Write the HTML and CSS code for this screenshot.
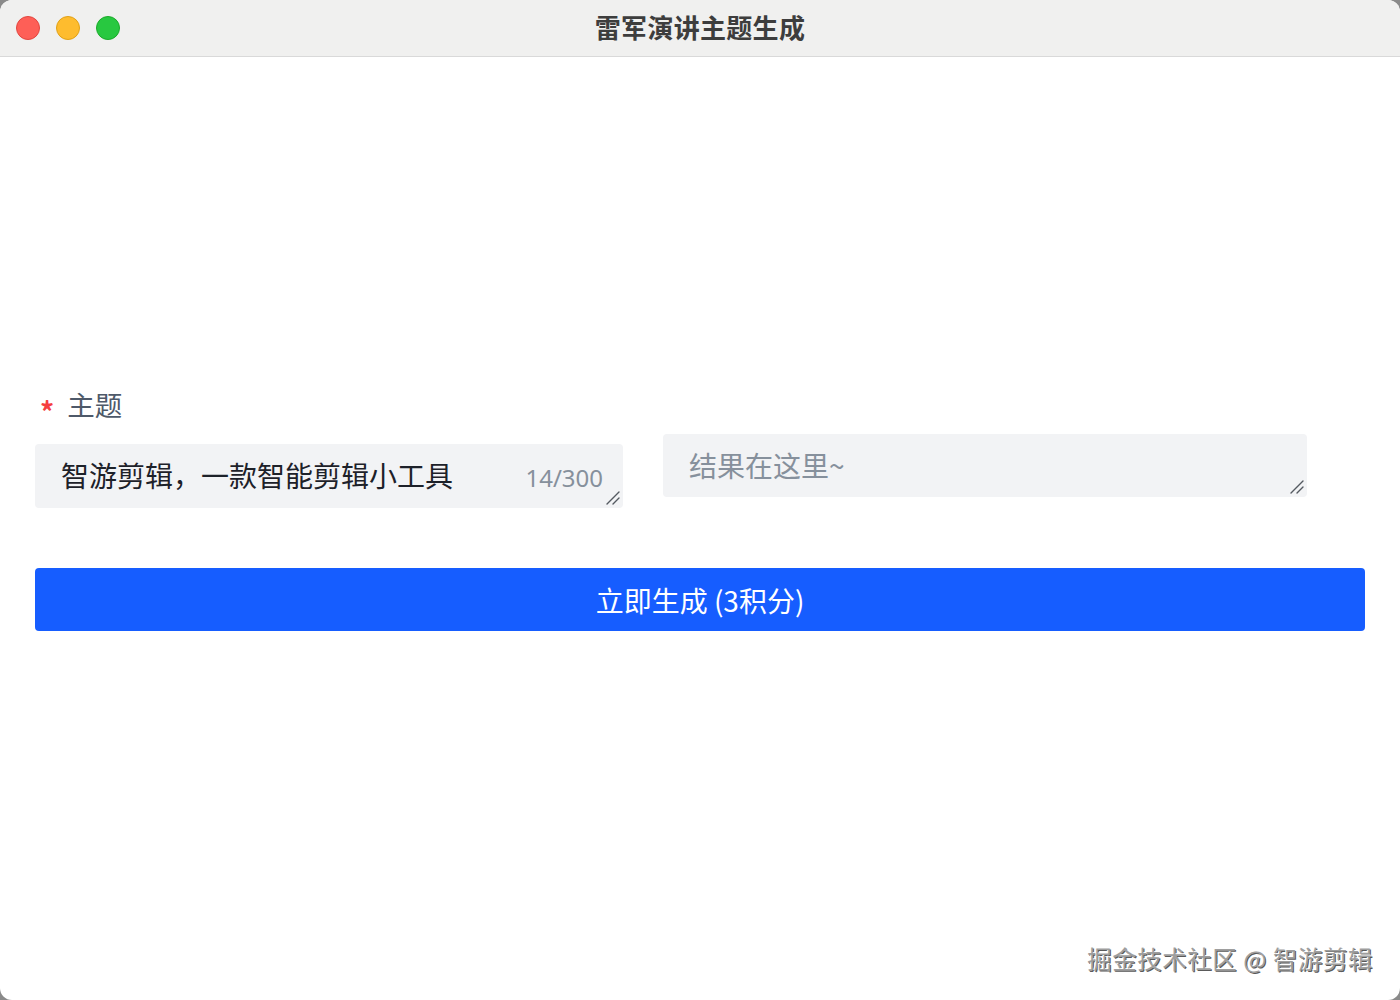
FILE: index.html
```html
<!DOCTYPE html>
<html lang="zh">
<head>
<meta charset="utf-8">
<title>雷军演讲主题生成</title>
<link rel="stylesheet" href="styles.css">
</head>
<body>
<div class="window">
  <div class="titlebar">
    <div class="lights">
      <span class="light red"></span>
      <span class="light yellow"></span>
      <span class="light green"></span>
    </div>
    <div class="title">雷军演讲主题生成</div>
  </div>
  <div class="content">
    <div class="form">
      <div class="row">
        <div class="col-left">
          <div class="label"><span class="req">*</span><span class="label-text">主题</span></div>
          <div class="field">
            <textarea class="input input-left" rows="1">智游剪辑，一款智能剪辑小工具</textarea>
            <span class="counter">14/300</span>
            <svg class="grip" width="14" height="14" viewBox="0 0 14 14"><path d="M1 13 L13 1 M7 13 L13 7" stroke="#555a61" stroke-width="1.4" fill="none" stroke-linecap="round"/></svg>
          </div>
        </div>
        <div class="col-right">
          <div class="field-right">
            <textarea class="input input-right" rows="1" placeholder="结果在这里~"></textarea>
            <svg class="grip" width="14" height="14" viewBox="0 0 14 14"><path d="M1 13 L13 1 M7 13 L13 7" stroke="#555a61" stroke-width="1.4" fill="none" stroke-linecap="round"/></svg>
          </div>
        </div>
      </div>
      <button class="submit">立即生成 (3积分)</button>
    </div>
    <div class="watermark">掘金技术社区 @ 智游剪辑</div>
  </div>
</div>
</body>
</html>
```

FILE: styles.css
```css
* { box-sizing: border-box; }
html, body {
  margin: 0;
  padding: 0;
  width: 1400px;
  height: 1000px;
  background: #8a8a8a;
  overflow: hidden;
}
body {
  font-family: "Noto Sans CJK SC", "Noto Sans", sans-serif;
}
.window {
  width: 1400px;
  height: 1000px;
  background: #ffffff;
  border-radius: 12px;
  overflow: hidden;
  display: flex;
  flex-direction: column;
}
.titlebar {
  height: 57px;
  flex: none;
  background: #f0f0ef;
  border-bottom: 1px solid #d9d9d9;
  position: relative;
  display: flex;
  align-items: center;
  justify-content: center;
}
.lights {
  position: absolute;
  left: 16px;
  top: 16px;
  display: flex;
  gap: 16px;
}
.light {
  width: 24px;
  height: 24px;
  border-radius: 50%;
  display: block;
}
.red { background: #fe5f57; border: 1px solid #e2463f; }
.yellow { background: #febc2e; border: 1px solid #e1a116; }
.green { background: #28c840; border: 1px solid #1aab29; }
.title {
  font-size: 26px;
  font-weight: 700;
  color: #3d3d3d;
  letter-spacing: 0.3px;
  margin-top: -4px;
}
.content {
  flex: 1;
  position: relative;
  padding: 327px 35px 0 35px;
}
.form {
  display: flex;
  flex-direction: column;
}
.row {
  display: flex;
  gap: 40px;
  align-items: flex-start;
}
.col-left {
  width: 588px;
  display: flex;
  flex-direction: column;
}
.label {
  display: flex;
  align-items: center;
  height: 44px;
  padding-left: 5px;
}
.req {
  color: #f53f3f;
  font-size: 28px;
  font-weight: 700;
  margin-right: 13px;
  margin-top: 10px;
  line-height: 1;
}
.label-text {
  font-size: 27.5px;
  color: #4e5969;
  margin-top: -4px;
}
.field, .field-right {
  position: relative;
}
.field {
  margin-top: 16px;
}
.input {
  display: block;
  width: 100%;
  height: 64px;
  border: none;
  outline: none;
  background: #f2f3f5;
  border-radius: 4px;
  font-family: "Noto Sans CJK SC", "Noto Sans", sans-serif;
  font-size: 28px;
  line-height: 42px;
  padding: 10px 26px;
  color: #1d2129;
  resize: none;
}
.input::placeholder {
  color: #86909c;
}
.counter {
  position: absolute;
  right: 20px;
  top: 17px;
  font-family: "Noto Sans", sans-serif;
  font-size: 24px;
  color: #86909c;
}
.grip {
  position: absolute;
  right: 3px;
  bottom: 3px;
  display: block;
}
.col-right {
  width: 644px;
  margin-top: 50px;
}
.input-right {
  height: 63px;
}
.submit {
  margin-top: 60px;
  width: 1330px;
  height: 63px;
  border: none;
  border-radius: 4px;
  background: #165dff;
  color: #ffffff;
  font-family: "Noto Sans CJK SC", "Noto Sans", sans-serif;
  font-size: 28px;
  padding: 0;
}
.watermark {
  position: absolute;
  right: 27px;
  bottom: 24px;
  font-size: 24.5px;
  color: #9e9e9e;
  text-shadow: -1px -1px 0 #ffffff, 1px 1px 0 #5a5a5a;
  letter-spacing: 0.5px;
}
```
